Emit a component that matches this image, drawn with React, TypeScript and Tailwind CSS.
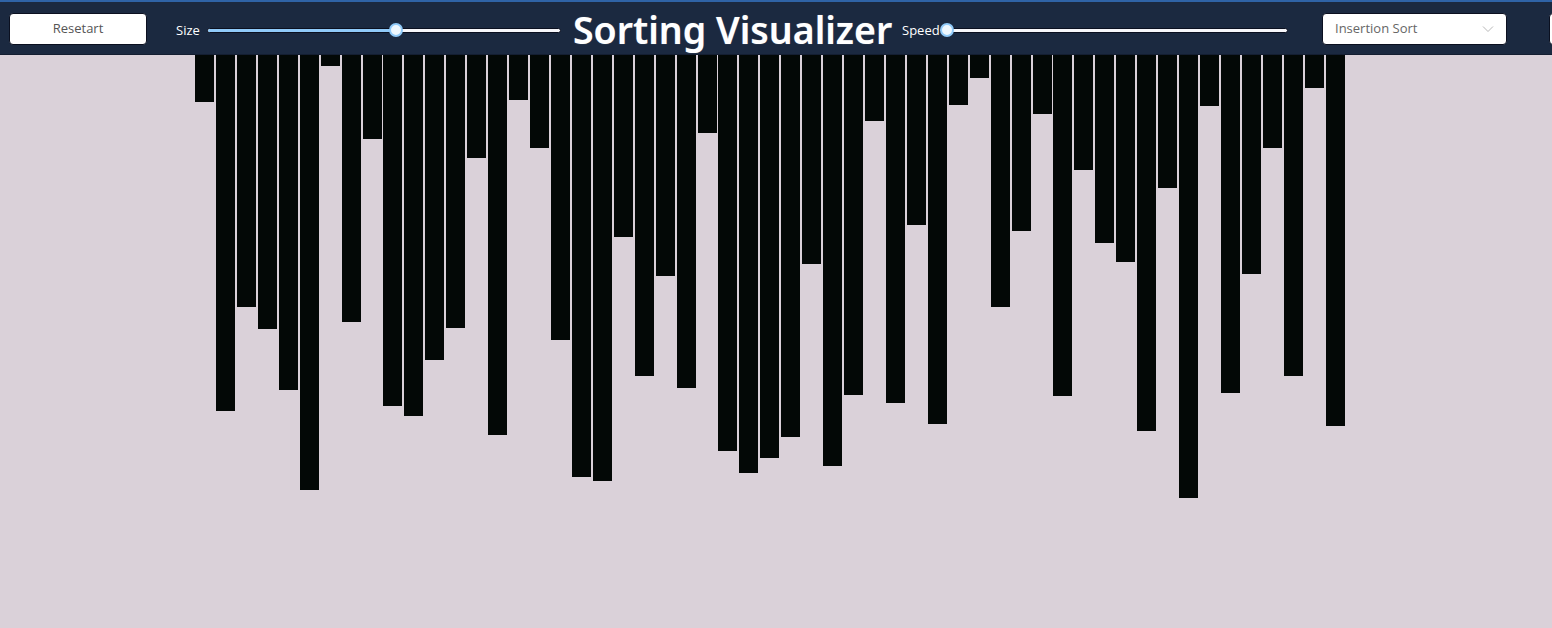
const heights = [
  101, 410, 306, 328, 389, 489, 65, 321, 138, 405, 415, 359, 327, 157, 434, 99, 147, 339, 476, 480,
  236, 375, 275, 387, 132, 450, 472, 457, 436, 263, 465, 394, 120, 402, 224, 423, 104, 77, 306, 230,
  113, 395, 169, 242, 261, 430, 187, 497, 105, 392, 273, 147, 375, 87, 425,
].map((bottom) => bottom - 54);

const uiFont = "font-['Open_Sans','Noto_Sans',sans-serif]";

function Slider({ width, value }: { width: number; value: number }) {
  return (
    <div className="relative mt-[2px] flex h-[16px] shrink-0 items-center" style={{ width }}>
      <div className="h-[5px] w-full overflow-hidden rounded-full border border-[#0b1020] bg-[#f7f7fb]">
        <div className="h-full bg-[#90caf9]" style={{ width: `${value}%` }} />
      </div>
      <div
        className="absolute top-[1px] h-[14px] w-[14px] -translate-x-1/2 rounded-full border-2 border-[#90caf9] bg-[#eef7fe]"
        style={{ left: `${value}%` }}
      />
    </div>
  );
}

export default function App() {
  return (
    <div className={`min-h-screen w-full overflow-hidden bg-[#dad1d9] ${uiFont}`}>
      <header className="flex h-[55px] items-center overflow-hidden border-t-2 border-b border-t-[#2f63a6] border-b-[#141e31] bg-[#1b2940] pl-[9px] pt-[2px]">
        <button className="h-[32px] w-[138px] shrink-0 rounded-[4px] border border-[#0b1020] bg-white text-[13px] text-[#555]">
          Resetart
        </button>
        <span className="ml-[29px] mt-[4px] w-[31px] shrink-0 text-[13px] text-white">Size</span>
        <Slider width={354} value={53.4} />
        <h1 className="ml-[12px] mt-[2px] w-[317px] shrink-0 whitespace-nowrap text-center font-['Noto_Sans','Open_Sans',sans-serif] text-[37.5px] font-semibold leading-none text-white [text-shadow:0_0_1px_rgba(255,255,255,0.4)]">
          Sorting Visualizer
        </h1>
        <span className="ml-[12px] mt-[4px] w-[38px] shrink-0 text-[13px] text-white">Speed</span>
        <Slider width={348} value={2} />
        <div className="ml-[34px] flex h-[32px] w-[185px] shrink-0 items-center justify-between rounded-[4px] border border-[#0b1020] bg-white pl-[12px] pr-[12px] text-[13px] text-[#666]">
          <span>Insertion Sort</span>
          <svg width="12" height="8" viewBox="0 0 12 8" fill="none" stroke="#b8b8b8" strokeWidth="1">
            <path d="M1 1.5 6 6.5 11 1.5" />
          </svg>
        </div>
        <div className="ml-[42px] h-[32px] w-[40px] shrink-0 rounded-[4px] border border-[#0b1020] bg-white" />
      </header>
      <main className="flex items-start gap-[1.94px] pl-[195px]">
        {heights.map((h, i) => (
          <div key={i} className="w-[19px] shrink-0 bg-[#030806]" style={{ height: h }} />
        ))}
      </main>
    </div>
  );
}
